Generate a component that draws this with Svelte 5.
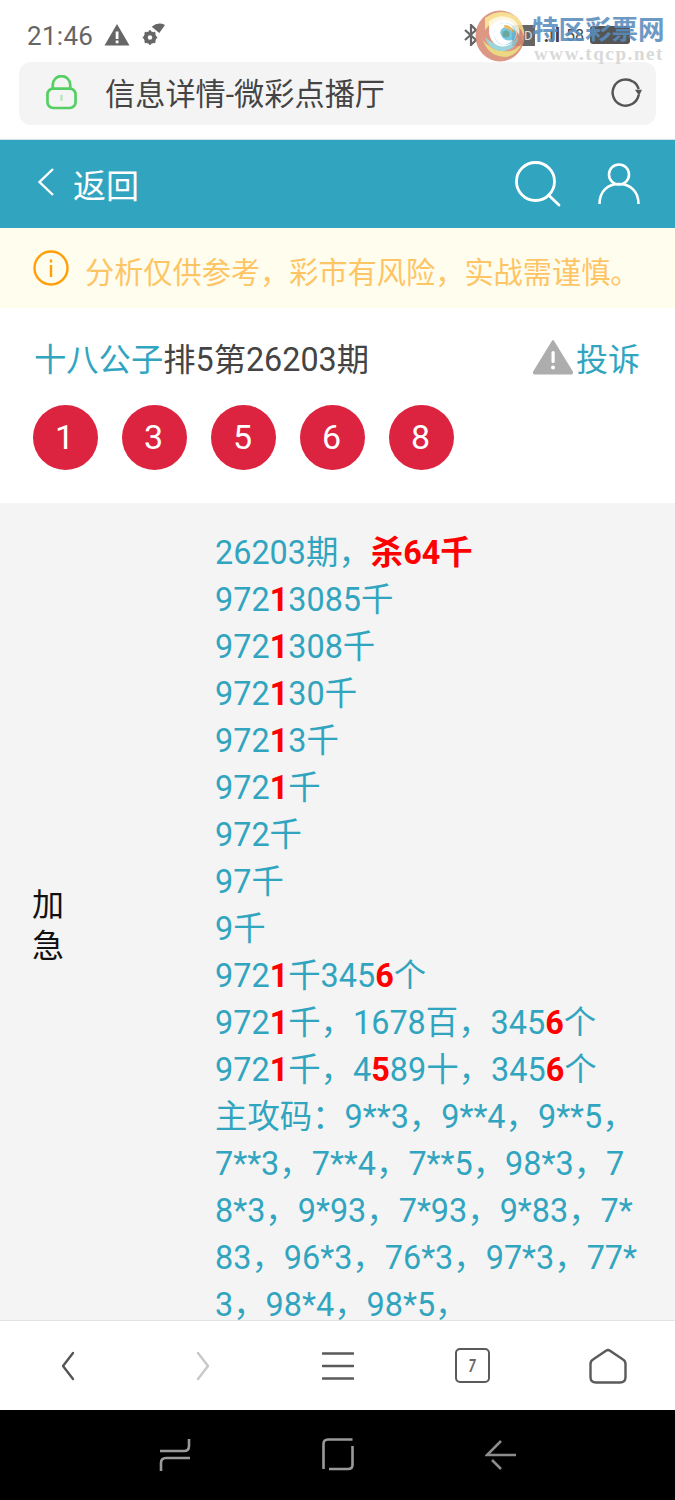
<script>
    const balls = [1, 3, 5, 6, 8];

    // r = 红色加粗
    const lines = [
        [['26203期，'], ['杀64千', 'r']],
        [['972'], ['1', 'r'], ['3085千']],
        [['972'], ['1', 'r'], ['308千']],
        [['972'], ['1', 'r'], ['30千']],
        [['972'], ['1', 'r'], ['3千']],
        [['972'], ['1', 'r'], ['千']],
        [['972千']],
        [['97千']],
        [['9千']],
        [['972'], ['1', 'r'], ['千345'], ['6', 'r'], ['个']],
        [['972'], ['1', 'r'], ['千，1678百，345'], ['6', 'r'], ['个']],
        [['972'], ['1', 'r'], ['千，4'], ['5', 'r'], ['89十，345'], ['6', 'r'], ['个']],
        [['主攻码：9**3，9**4，9**5，7**3，7**4，7**5，98*3，78*3，9*93，7*93，9*83，7*83，96*3，76*3，97*3，77*3，98*4，98*5，']]
    ];
</script>

<div class="page">
    <div class="status">
        <span class="time">21:46</span>
        <svg class="st-warn" viewBox="0 0 26 23"><path d="M13 1 L25.500 22.500 H0.500 Z" fill="#666"/><rect x="11.700" y="8.500" width="2.800" height="7.500" fill="#fff"/><rect x="11.700" y="17.500" width="2.800" height="2.800" fill="#fff"/></svg>
        <svg class="st-gear" viewBox="0 0 24 24">
            <path d="M9.700 4.700 Q16 -0.500 23 3 L17.300 11 Z" fill="#666"/>
            <circle cx="8" cy="15.500" r="4.600" fill="none" stroke="#666" stroke-width="3.400"/>
            <path d="M8 8.300V22.700M0.800 15.500H15.200M2.900 10.400L13.100 20.600M13.100 10.400L2.900 20.600" stroke="#666" stroke-width="2.200"/>
            <circle cx="8" cy="15.500" r="2.200" fill="#fff"/>
        </svg>
        <div class="st-right">
            <svg class="st-bt" viewBox="0 0 14 22"><path d="M1 6 L12 16 L7 21 V1 L12 6 L1 16" fill="none" stroke="#666" stroke-width="2.200"/></svg>
            <span class="hd">HD</span>
            <span class="sig">.ıl</span>
            <span class="pct">58</span>
            <span class="batt"></span>
        </div>
    </div>

    <div class="urlbar">
        <svg class="lock" viewBox="0 0 32 36"><path d="M7 15 V10 A9 9 0 0 1 25 10 V15" fill="none" stroke="#55cf63" stroke-width="2.800"/><rect x="1.500" y="14" width="29" height="20" rx="6" fill="none" stroke="#55cf63" stroke-width="2.800"/><rect x="15" y="20.500" width="2" height="6" fill="#a9e6b0"/></svg>
        <span class="url-text">信息详情-微彩点播厅</span>
        <svg class="reload" viewBox="0 0 34 32"><path d="M30 19 A14 14 0 1 1 24 5" fill="none" stroke="#555" stroke-width="2.600"/><path d="M24 5 Q28 7 30 13" fill="none" stroke="#555" stroke-width="2.600"/><path d="M33.500 13.500 L26 13.500 L30.500 20 Z" fill="#555"/></svg>
    </div>

    <header class="nav">
        <svg class="nav-back" viewBox="0 0 18 30"><path d="M16 2 L2.500 15 L16 28" fill="none" stroke="#fff" stroke-width="2.400"/></svg>
        <span class="nav-title">返回</span>
        <svg class="nav-search" viewBox="0 0 46 46"><circle cx="20.500" cy="20.500" r="19" fill="none" stroke="#fff" stroke-width="2.800"/><path d="M33.500 34 L44 44" stroke="#fff" stroke-width="2.800" stroke-linecap="round"/></svg>
        <svg class="nav-user" viewBox="0 0 42 42"><circle cx="21" cy="11.500" r="10" fill="none" stroke="#fff" stroke-width="2.600"/><path d="M1.500 41 C1.500 28 10 21 21 21 C32 21 40.500 28 40.500 41" fill="none" stroke="#fff" stroke-width="2.600"/></svg>
    </header>

    <div class="notice">
        <svg class="info" viewBox="0 0 36 36"><circle cx="18" cy="18" r="16.500" fill="none" stroke="#ff9f0a" stroke-width="2.400"/><rect x="16.800" y="15" width="2.400" height="12" fill="#ff9f0a"/><rect x="16.800" y="9.500" width="2.400" height="3" fill="#ff9f0a"/></svg>
        <span class="notice-text">分析仅供参考，彩市有风险，实战需谨慎。</span>
    </div>

    <section class="head">
        <div class="title-row">
            <div class="title"><span class="teal">十八公子</span>排5第26203期</div>
            <div class="report">
                <svg viewBox="0 0 42 36"><path d="M21 2 L40 33 Q40.500 34.500 39 34.500 H3 Q1.500 34.500 2 33 Z" fill="#adadad" stroke="#adadad" stroke-width="2" stroke-linejoin="round"/><rect x="19.500" y="12" width="3.200" height="12" rx="1.500" fill="#fff"/><circle cx="21" cy="28.500" r="2" fill="#fff"/></svg>
                <span class="teal">投诉</span>
            </div>
        </div>
        <div class="balls">
            {#each balls as n}
                <span class="ball">{n}</span>
            {/each}
        </div>
    </section>

    <main class="content">
        <div class="row">
            <div class="label">加急</div>
            <div class="body">
                {#each lines as line}
                    <div>{#each line as part}{#if part[1]}<b>{part[0]}</b>{:else}{part[0]}{/if}{/each}</div>
                {/each}
            </div>
        </div>
    </main>

    <nav class="toolbar">
        <svg class="tb-arrow" viewBox="0 0 14 30"><path d="M12 2 L2 15 L12 28" fill="none" stroke="#555" stroke-width="2.400" stroke-linecap="round" stroke-linejoin="round"/></svg>
        <svg class="tb-arrow" viewBox="0 0 14 30"><path d="M2 2 L12 15 L2 28" fill="none" stroke="#c8c8c8" stroke-width="2.400" stroke-linecap="round" stroke-linejoin="round"/></svg>
        <svg class="tb-menu" viewBox="0 0 32 30"><path d="M1 2.500 H31 M1 15 H31 M1 27.500 H31" stroke="#5a5a5a" stroke-width="2.600" stroke-linecap="round"/></svg>
        <div class="tabs"><span>7</span></div>
        <svg class="tb-home" viewBox="0 0 38 36"><path d="M19 2 Q20 2 21 2.700 L34 11.500 Q36.500 13 36.500 16 V29 Q36.500 34.500 31 34.500 H7 Q1.500 34.500 1.500 29 V16 Q1.500 13 4 11.500 L17 2.700 Q18 2 19 2 Z" fill="none" stroke="#5a5a5a" stroke-width="2.400"/></svg>
    </nav>

    <div class="softkeys">
        <svg viewBox="0 0 32 34"><path d="M30 1 V8 Q30 13 25 13 H1 M31 20 H7 Q2 20 2 25 V33" fill="none" stroke="#9a9a9a" stroke-width="2.600"/></svg>
        <svg viewBox="0 0 32 34"><path d="M1.500 31 V6 Q1.500 1.500 6 1.500 H30.500 M7 31 H26 Q30.500 31 30.500 27 V8" fill="none" stroke="#9a9a9a" stroke-width="2.600"/></svg>
        <svg viewBox="0 0 32 32"><path d="M31 16 H2 L16 2 M7 21 L16 30" fill="none" stroke="#8c8c8c" stroke-width="2.600"/></svg>
    </div>

    <!-- marca de agua encima de la barra de estado -->
    <div class="mark">
        <svg class="mark-logo" viewBox="0 0 50 52">
            <ellipse cx="25" cy="26" rx="24.500" ry="25.500" fill="#d98a72"/>
            <path d="M10 8 Q25 -3 40 6 Q50 14 49 26 Q45 14 33 11 Q18 8 10 20 Z" fill="#f6dc86"/>
            <path d="M14 11 Q27 2 39 10 Q46 17 44 25 Q38 14 26 14 Q16 15 14 26 Z" fill="#fdf5d8"/>
            <path d="M8 30 Q13 46 30 47 Q42 46 47 33 Q40 43 28 41 Q15 40 8 30 Z" fill="#e9d36f"/>
            <path d="M10 27 Q14 41 28 41 Q41 40 44 26 Q38 36 27 35 Q16 34 10 27 Z" fill="#8fd0d8"/>
            <circle cx="28" cy="23" r="13.500" fill="#fff"/>
            <circle cx="30" cy="24" r="11" fill="#63bfe0"/>
            <path d="M19 26 Q18 14 29 13 Q38 13 40 21 Q34 15 28 18 Q23 21 27 27 Q31 32 38 30 Q31 38 24 33 Q20 30 19 26 Z" fill="#fff"/>
            <path d="M29 15 Q38 15 39 24 Q35 18 30 19 Z" fill="#e8b04c"/>
            <circle cx="31" cy="24" r="3.500" fill="#5a9a8c"/>
        </svg>
        <div class="mark-text">
            <div class="mark-cn">特区彩票网</div>
            <div class="mark-en">www.tqcp.net</div>
        </div>
    </div>
</div>

<style>
    :global(body) {
        margin: 0;
        background: #fff;
    }
    .page {
        position: relative;
        width: 675px;
        height: 1500px;
        display: flex;
        flex-direction: column;
        overflow: hidden;
        font-family: Roboto, "Noto Sans CJK SC", sans-serif;
    }
    .teal {
        color: #31a5bf;
    }

    .status {
        height: 62px;
        flex: none;
        display: flex;
        align-items: center;
        padding: 10px 15px 0 27px;
        box-sizing: border-box;
        color: #666;
    }
    .time {
        font-size: 26px;
        letter-spacing: 0.3px;
        margin-top: -1px;
    }
    .st-warn {
        width: 26px;
        height: 23px;
        margin: -3px 0 0 11px;
    }
    .st-gear {
        width: 24px;
        height: 24px;
        margin: -4px 0 0 12px;
    }
    .st-right {
        margin-left: auto;
        display: flex;
        align-items: center;
        gap: 4px;
        margin-top: -2px;
        font-size: 15px;
    }
    .st-bt {
        width: 14px;
        height: 22px;
        margin-right: 30px;
    }
    .hd {
        background: #666;
        color: #ddd;
        font-size: 13px;
        padding: 3px 3px;
    }
    .sig {
        font-weight: 700;
        font-size: 20px;
        color: #444;
        margin-left: 4px;
    }
    .pct {
        font-size: 16px;
        color: #444;
        margin-left: 2px;
    }
    .batt {
        width: 40px;
        height: 18px;
        background: #555;
        border-radius: 3px;
        margin: 0 30px 0 2px;
    }

    .urlbar {
        flex: none;
        height: 63px;
        margin: 0 19px 14px;
        padding: 0 13px 0 27px;
        background: #f4f4f4;
        border-radius: 12px;
        display: flex;
        align-items: center;
    }
    .lock {
        width: 31px;
        height: 35px;
        margin-top: -3px;
    }
    .url-text {
        margin-left: 28px;
        padding-bottom: 4px;
        font-size: 30.2px;
        color: #444;
        flex: 1;
    }
    .reload {
        width: 33px;
        height: 30px;
        margin-top: -3px;
    }

    .nav {
        flex: none;
        height: 89px;
        box-sizing: border-box;
        border-top: 1px solid #cfe3e9;
        background: #31a5bf;
        display: flex;
        align-items: center;
        padding: 0 35px 0 37px;
        color: #fff;
    }
    .nav-back {
        width: 18px;
        height: 30px;
        margin-top: -4px;
    }
    .nav-title {
        font-size: 33px;
        margin-left: 18px;
        flex: 1;
    }
    .nav-search {
        width: 46px;
        height: 46px;
    }
    .nav-user {
        width: 42px;
        height: 42px;
        margin-left: 37px;
    }

    .notice {
        flex: none;
        height: 80px;
        background: #fffdee;
        display: flex;
        align-items: center;
        padding-left: 33px;
        font-size: 29.2px;
        color: #fdc565;
    }
    .notice-text {
        padding-top: 4px;
    }
    .info {
        width: 36px;
        height: 36px;
        margin-right: 16px;
    }

    .head {
        flex: none;
        height: 195px;
        box-sizing: border-box;
        padding: 27px 35px 0 33px;
    }
    .title-row {
        display: flex;
        align-items: center;
        justify-content: space-between;
        height: 44px;
    }
    .title {
        font-size: 32.3px;
        color: #444;
        margin-left: 1px;
    }
    .report {
        display: flex;
        align-items: center;
        font-size: 32px;
    }
    .report svg {
        width: 42px;
        height: 36px;
        margin-right: 2px;
    }
    .balls {
        display: flex;
        gap: 24px;
        margin-top: 26px;
    }
    .ball {
        width: 65px;
        height: 65px;
        box-sizing: border-box;
        padding: 0 2px 2px 0;
        border-radius: 50%;
        background: #dc2340;
        color: #fff;
        font-size: 34px;
        display: flex;
        align-items: center;
        justify-content: center;
    }

    .content {
        flex: 1;
        min-height: 0;
        overflow: hidden;
        background: #f4f4f4;
    }
    .row {
        display: flex;
        align-items: center;
        padding: 27px 35px 21px 32px;
    }
    .label {
        width: 32px;
        margin-bottom: 8px;
        font-size: 32px;
        line-height: 41px;
        color: #111;
    }
    .body {
        flex: 1;
        min-width: 0;
        font-size: 32.4px;
        line-height: 47px;
        color: #31a5bf;
        word-break: break-all;
        margin-left: 151px;
    }
    .body b {
        color: #f00;
        font-weight: 700;
    }

    .toolbar {
        flex: none;
        height: 90px;
        box-sizing: border-box;
        border-top: 1px solid #e2e2e2;
        background: #fff;
        display: grid;
        grid-template-columns: repeat(5, 135px);
        align-items: center;
        justify-items: center;
    }
    .tb-arrow {
        width: 14px;
        height: 30px;
    }
    .tb-menu {
        width: 32px;
        height: 30px;
    }
    .tabs {
        width: 31px;
        height: 31px;
        border: 2.5px solid #5a5a5a;
        border-radius: 5px;
        font-size: 18px;
        font-weight: 700;
        font-style: italic;
        color: #666;
        display: flex;
        align-items: center;
        justify-content: center;
    }
    .tabs span {
        transform: scaleX(0.7);
    }
    .tb-home {
        width: 38px;
        height: 36px;
    }

    .softkeys {
        flex: none;
        height: 90px;
        background: #000;
        display: flex;
        align-items: center;
        gap: 131px;
        padding-left: 159px;
    }
    .softkeys svg {
        width: 32px;
        height: 34px;
    }

    .mark {
        position: absolute;
        left: 475px;
        top: 10px;
        display: flex;
        opacity: 0.88;
    }
    .mark-logo {
        width: 50px;
        height: 52px;
    }
    .mark-text {
        margin-left: 7px;
    }
    .mark-cn {
        font-size: 26.5px;
        line-height: 28px;
        margin-top: 6px;
        color: #5a8dbd;
        font-weight: 700;
    }
    .mark-en {
        font-family: "Liberation Serif", serif;
        font-size: 19px;
        font-weight: 700;
        line-height: 20px;
        color: #d4d4d4;
        letter-spacing: 1.6px;
        margin-left: 2px;
    }
</style>
